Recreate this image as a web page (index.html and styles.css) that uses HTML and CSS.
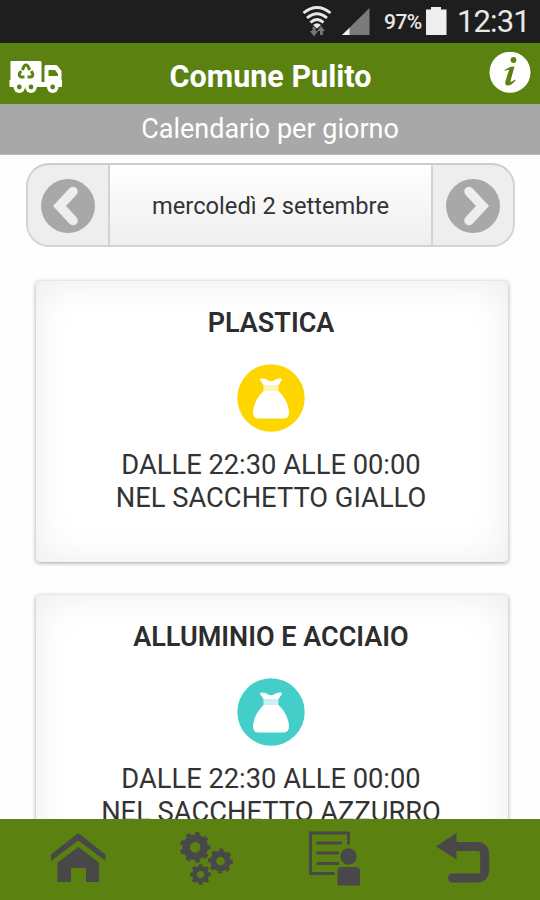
FILE: index.html
```
<!DOCTYPE html>
<html lang="it">
<head>
<meta charset="utf-8">
<title>Comune Pulito</title>
<link rel="stylesheet" href="styles.css">
</head>
<body>
<div class="app">
  <div class="status">
    <svg class="signals" width="70" height="43" viewBox="302 0 70 43">
      <g fill="none" stroke="#e8e8e8" stroke-width="2.900">
        <path d="M303.500 13Q317 2 330.500 13M307 18Q317 9.500 327 18M310.500 22.500Q317 16.500 323.500 22.500"/>
      </g>
      <path d="M313 25Q317 21.500 321 25L317 28.500Z" fill="#e8e8e8"/>
      <path d="M312.500 27h3v4h2.500l-4 5.500-4-5.500h2.500ZM320 35v-4h-3l4-5 4 5h-2v4Z" fill="#777"/>
      <path d="M342 35L369.500 8V35Z" fill="#7b7b7b"/>
      <path d="M342 35L349.500 28V35Z" fill="#f2f2f2"/>
    </svg>
    <span class="percent">97%</span>
    <svg class="battery" width="22" height="43" viewBox="425 0 22 43"><path d="M426 9.500h5V7h10v2.500h5.500v25.500H426Z" fill="#eee"/></svg>
    <span class="clock">12:31</span>
  </div>
  <header class="header">
    <svg class="truck" width="56" height="36" viewBox="8 59 56 36">
      <path d="M10.500 61.500Q10.500 61 11.500 61H40Q41.500 61 41.500 62.500V82H44.500V66.500Q44.500 65 46 65H55.500Q57.500 65 58.500 67L61.500 71V80H62V87H9.500V80H10.500Z" fill="#fff"/>
      <g fill="#fff"><circle cx="19.300" cy="87.300" r="5.700"/><circle cx="31" cy="87.300" r="5.700"/><circle cx="52.700" cy="87.300" r="5.700"/></g>
      <path d="M48.500 70H55L58 74V76H48.500Z" fill="#5b8111"/>
      <g fill="#5b8111"><circle cx="19.300" cy="87" r="2.400"/><circle cx="31" cy="87" r="2.400"/><circle cx="52.700" cy="87" r="2.400"/></g>
      <g fill="none" stroke="#5b8111" stroke-width="3"><path d="M22.200 70L24.200 66Q26 64 27.800 66L29.800 70M31.300 71L32.800 74Q32.800 77 30 77H27.500M24.500 77H21.500Q18.500 76.500 19.500 73.500L21 71"/></g>
    </svg>
    <h1 class="title">Comune Pulito</h1>
    <svg class="info" width="42" height="42" viewBox="489 52 42 42">
      <circle cx="510" cy="72.300" r="20.500" fill="#fff"/>
      <circle cx="513.500" cy="60" r="2.900" fill="#5b8111"/>
      <path d="M504.500 70Q509 66.500 514.500 66.500L510.500 81Q510.500 83 515 79.500L515.500 80.500Q511 86 507 85.500Q504.500 85 505.500 81L509 70Q508.500 69 505 71Z" fill="#5b8111"/>
    </svg>
  </header>
  <div class="subtitle"><span>Calendario per giorno</span></div>
  <main class="content">
    <div class="picker">
      <div class="prev"><svg width="54" height="54" viewBox="0 0 54 54"><circle cx="27" cy="27" r="27" fill="#a8a8a8"/><path d="M32 12.500L18.500 27L32 41.500" fill="none" stroke="#eee" stroke-width="9.500" stroke-linecap="round"/></svg></div>
      <div class="date"><span>mercoledì 2 settembre</span></div>
      <div class="next"><svg width="54" height="54" viewBox="0 0 54 54"><circle cx="27" cy="27" r="27" fill="#a8a8a8"/><path d="M23 12.500L36.500 27L23 41.500" fill="none" stroke="#eee" stroke-width="9.500" stroke-linecap="round"/></svg></div>
    </div>
    <section class="card">
      <h2 class="name">PLASTICA</h2>
      <svg class="bag" width="68" height="68" viewBox="0 0 68 68">
        <circle cx="34" cy="34" r="33.700" fill="#ffd500"/>
        <path d="M23 16Q22.500 14.500 24.500 14.500Q29.500 14.500 31 16.500Q34 18 37 16.500Q39 14.500 43.500 14.500Q45.500 14.500 45 16L41.500 21H26.500Z" fill="#fff"/>
        <path d="M26.500 21H41.500V27H26.500Z" fill="#fff" opacity=".72"/>
        <path d="M26.500 27H41.500Q49 34 51.500 44Q53.500 54.500 47 54.500H21Q14.500 54.500 16.500 44Q19 34 26.500 27Z" fill="#fff"/>
      </svg>
      <p class="line hours"><span>DALLE 22:30 ALLE 00:00</span></p>
      <p class="line"><span>NEL SACCHETTO GIALLO</span></p>
    </section>
    <section class="card">
      <h2 class="name">ALLUMINIO E ACCIAIO</h2>
      <svg class="bag" width="68" height="68" viewBox="0 0 68 68">
        <circle cx="34" cy="34" r="33.700" fill="#43cec9"/>
        <path d="M23 16Q22.500 14.500 24.500 14.500Q29.500 14.500 31 16.500Q34 18 37 16.500Q39 14.500 43.500 14.500Q45.500 14.500 45 16L41.500 21H26.500Z" fill="#fff"/>
        <path d="M26.500 21H41.500V27H26.500Z" fill="#fff" opacity=".72"/>
        <path d="M26.500 27H41.500Q49 34 51.500 44Q53.500 54.500 47 54.500H21Q14.500 54.500 16.500 44Q19 34 26.500 27Z" fill="#fff"/>
      </svg>
      <p class="line hours"><span>DALLE 22:30 ALLE 00:00</span></p>
      <p class="line"><span>NEL SACCHETTO AZZURRO</span></p>
    </section>
  </main>
  <nav class="tabs">
    <svg width="64" height="64" viewBox="46 827 64 64" fill="#484848">
      <path d="M78.300 833L105.500 854.500V861L78.300 840.500L51 861V854.500Z"/>
      <path d="M78.300 847L99 862.500V882H86V868H71V882H57.500V862.500Z"/>
    </svg>
    <svg width="64" height="64" viewBox="174 827 64 64" fill="none" stroke="#484848">
      <circle cx="195.200" cy="847.300" r="9" stroke-width="7.500"/>
      <circle cx="195.200" cy="847.300" r="13.500" stroke-width="3.600" pathLength="180" stroke-dasharray="10" stroke-dashoffset="5"/>
      <circle cx="220.500" cy="861" r="7.300" stroke-width="6"/>
      <circle cx="220.500" cy="861" r="10.800" stroke-width="3.200" pathLength="160" stroke-dasharray="10" stroke-dashoffset="3"/>
      <circle cx="200.500" cy="874.500" r="6" stroke-width="5"/>
      <circle cx="200.500" cy="874.500" r="9" stroke-width="3" pathLength="160" stroke-dasharray="10" stroke-dashoffset="5"/>
    </svg>
    <svg width="64" height="64" viewBox="302 827 64 64" fill="none" stroke="#484848">
      <path d="M348.500 844.500V833H310.500V873.500H334.500" stroke-width="2.800"/>
      <path d="M316.500 843H342M316.500 853H339M316.500 863.500H339" stroke-width="2.800"/>
      <circle cx="348.500" cy="856.500" r="8.200" fill="#484848" stroke="none"/>
      <path d="M337.500 885.500V871Q337.500 867 341.500 867H356Q360 867 360 871V885.500Z" fill="#484848" stroke="none"/>
    </svg>
    <svg width="64" height="64" viewBox="430 827 64 64" fill="none" stroke="#484848">
      <path d="M436 846.500L456.500 833V859.500Z" fill="#484848" stroke="none"/>
      <path d="M455 846.500H477Q484.700 846.500 484.700 854.500V870Q484.700 878 477 878H452.500" stroke-width="9"/>
      <circle cx="452.500" cy="878" r="4.500" fill="#484848" stroke="none"/>
    </svg>
  </nav>
</div>
</body>
</html>
```
FILE: styles.css
```
* { box-sizing: border-box; }
body { margin: 0; font-family: Roboto, "Liberation Sans", sans-serif; color: #333; background: #fff; }
svg { display: block; flex: none; }
h1, h2, p { margin: 0; }
.app { width: 540px; height: 900px; display: flex; flex-direction: column; overflow: hidden; }
.status { flex: none; height: 43px; background: #1e1e1e; color: #e8e8e8; display: flex; align-items: center; padding-left: 302px; white-space: nowrap; }
.percent { font-size: 21px; font-weight: 500; line-height: 43px; width: 41px; margin-left: 12px; padding-top: 2px; letter-spacing: -0.5px; }
.clock { font-size: 31px; line-height: 43px; margin-left: 10px; letter-spacing: -0.9px; }
.header { flex: none; height: 61px; background: #5b8111; display: flex; align-items: center; justify-content: space-between; padding: 0 9px 0 8px; }
.info { margin-bottom: 2px; }
.truck { margin-top: 6px; }
.title { color: #fff; font-size: 30.5px; line-height: 55px; font-weight: 700; padding-top: 6px; margin-right: 12px; }
.subtitle { flex: none; height: 51px; background: #a8a8a8; border-bottom: 1px solid #bbb; color: #fff; font-size: 27px; line-height: 51px; text-align: center; }
.content { flex: 1; min-height: 0; overflow: hidden; padding: 8px 25px 0 26px; background: #fefefe; }
.picker { height: 84px; display: grid; grid-template-columns: 82px 1fr 82px; border: 2px solid #d4d4d4; border-top-color: #ccc; border-radius: 23px; overflow: hidden; background: #eee; }
.prev, .next { display: flex; align-items: center; justify-content: center; }
.prev { border-right: 2px solid #d2d2d2; }
.next { border-left: 2px solid #d2d2d2; }
.date { font-size: 23.7px; line-height: 82px; text-align: center; background: linear-gradient(#fff, #eee); }
.card { height: 281px; margin: 34px 7px 0 10px; padding: 25px 2px 0 0; border-radius: 4px; text-align: center; background: #fff; box-shadow: 0 1px 4px rgba(0,0,0,.38), inset 0 0 38px rgba(0,0,0,.08); }
.card + .card { margin-top: 33px; }
.name { font-size: 27px; line-height: 34px; font-weight: 600; color: #2d2d2d; }
.bag { margin: 24px auto 0; }
.line { font-size: 27.3px; line-height: 33px; white-space: nowrap; }
.hours { margin-top: 17px; }
.tabs { flex: none; height: 81px; background: #5b8111; display: flex; justify-content: space-around; padding: 8px 14px 0; }
```
